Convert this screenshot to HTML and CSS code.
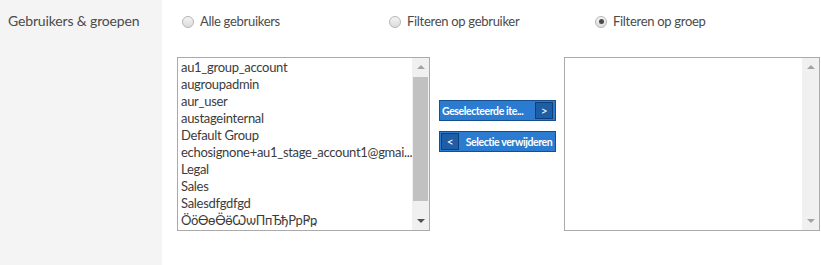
FILE: index.html
```html
<html>
    <head>
        <title>Gebruikers & groepen</title>
        <link rel="stylesheet" href="styles.css">
    </head>
    <body>
        <div id="panel">
            <div class="side">
                <span class="side-label">Gebruikers &amp; groepen</span>
            </div>
            <div class="main">
                <div class="radios">
                    <label class="radio"><span class="dot"></span>Alle gebruikers</label>
                    <label class="radio"><span class="dot"></span>Filteren op gebruiker</label>
                    <label class="radio"><span class="dot checked"></span>Filteren op groep</label>
                </div>
                <div class="lists">
                    <div class="listbox source">
                        <div class="items">
                            <div class="item">au1_group_account</div>
                            <div class="item">augroupadmin</div>
                            <div class="item">aur_user</div>
                            <div class="item">austageinternal</div>
                            <div class="item">Default Group</div>
                            <div class="item">echosignone+au1_stage_account1@gmai...</div>
                            <div class="item">Legal</div>
                            <div class="item">Sales</div>
                            <div class="item">Salesdfgdfgd</div>
                            <div class="item">ÖöѲѳѲ̈ѳ̈ѠѡПпЂђРрҎҏ</div>
                        </div>
                        <div class="scrollbar">
                            <span class="arrow up"></span>
                            <div class="track"><div class="thumb"></div></div>
                            <span class="arrow down"></span>
                        </div>
                    </div>
                    <div class="buttons">
                        <div class="btn">
                            <span class="btn-text">Geselecteerde ite...</span>
                            <span class="btn-arrow">&gt;</span>
                        </div>
                        <div class="btn">
                            <span class="btn-arrow">&lt;</span>
                            <span class="btn-text centered">Selectie verwijderen</span>
                        </div>
                    </div>
                    <div class="listbox target">
                        <div class="items"></div>
                        <div class="scrollbar light">
                            <span class="arrow up"></span>
                            <div class="track"></div>
                            <span class="arrow down"></span>
                        </div>
                    </div>
                </div>
            </div>
        </div>
    </body>
</html>
```

FILE: styles.css
```css
body {
    margin: 0;
    background-color: #fff;
    font-family: "Source Sans Pro", Lato, "Open Sans", sans-serif;
    color: #4b4b4b;
}
#panel {
    display: flex;
    height: 265px;
}
.side {
    width: 162px;
    background-color: #f4f4f4;
    padding: 12px 0 0 8px;
    box-sizing: border-box;
}
.side-label {
    font-size: 14px;
    letter-spacing: -0.15px;
}
.main {
    flex: 1;
    padding: 13px 0 0 15px;
}
.radios {
    display: grid;
    grid-template-columns: 207px 206px auto;
    padding-left: 5px;
    font-size: 13px;
    line-height: 17px;
    letter-spacing: -0.3px;
}
.radio {
    display: flex;
    align-items: center;
}
.dot {
    width: 12px;
    height: 12px;
    border: 1px solid #b5b5b5;
    border-radius: 50%;
    background: linear-gradient(#f4f4f4, #dcdcdc);
    margin-right: 6px;
    box-sizing: border-box;
    display: flex;
    align-items: center;
    justify-content: center;
}
.dot.checked::after {
    content: "";
    width: 5px;
    height: 5px;
    border-radius: 50%;
    background-color: #4a4a4a;
}
.lists {
    display: flex;
    align-items: flex-start;
    margin-top: 27px;
}
.listbox {
    display: flex;
    height: 174px;
    border: 1px solid #aaa;
    box-sizing: border-box;
    background-color: #fff;
}
.source {
    width: 253px;
}
.target {
    width: 256px;
}
.items {
    flex: 1;
    overflow: hidden;
    padding: 1px 0 0 3px;
    font-size: 13px;
    line-height: 17px;
    letter-spacing: -0.3px;
    color: #3c3c3c;
}
.item {
    white-space: nowrap;
}
.scrollbar {
    width: 17px;
    background-color: #f0f0f0;
    display: flex;
    flex-direction: column;
    align-items: center;
}
.track {
    flex: 1;
    width: 100%;
}
.thumb {
    margin: 1px 0 0 1px;
    width: 15px;
    height: 124px;
    background-color: #c1c1c1;
}
.arrow {
    width: 0;
    height: 0;
    margin: 7px 0;
    border-left: 4px solid transparent;
    border-right: 4px solid transparent;
}
.arrow.up {
    border-bottom: 4px solid #a3a3a3;
}
.arrow.down {
    border-top: 4px solid #505050;
}
.light .arrow.down {
    border-top-color: #a3a3a3;
}
.buttons {
    display: flex;
    flex-direction: column;
    gap: 10px;
    margin: 43px 8px 0 9px;
}
.btn {
    display: flex;
    align-items: center;
    width: 117px;
    height: 21px;
    box-sizing: border-box;
    border: 1px solid #164f8e;
    background-color: #2b7bd0;
    color: #fff;
    font-size: 10.5px;
    font-weight: bold;
    letter-spacing: -0.4px;
    cursor: pointer;
}
.btn-text {
    flex: 1;
    padding-left: 2px;
    white-space: nowrap;
}
.btn-text.centered {
    text-align: center;
}
.btn-arrow {
    width: 18px;
    height: 17px;
    margin: 0 2px 0 1px;
    box-sizing: border-box;
    border: 1px solid #0e3f78;
    background-color: #1e5ea6;
    text-align: center;
    line-height: 15px;
    font-size: 12px;
    font-weight: normal;
}
```
